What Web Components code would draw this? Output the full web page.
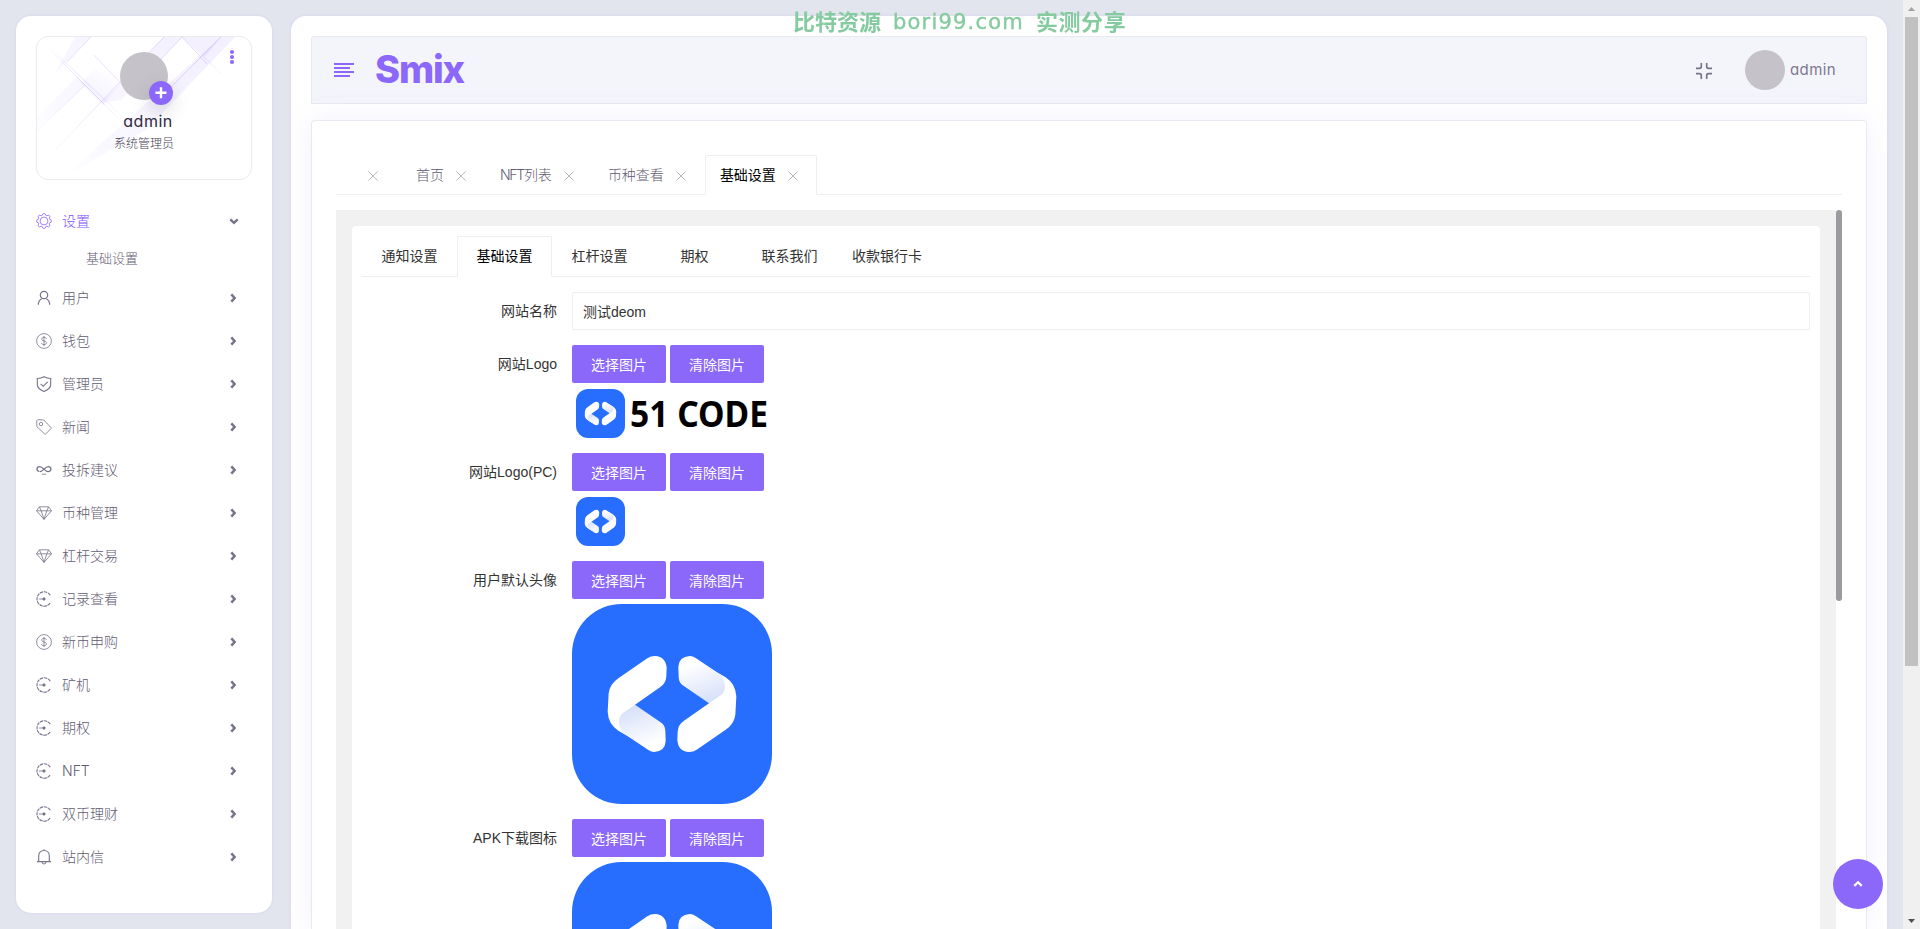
<!DOCTYPE html>
<html lang="zh-CN">
<head>
<meta charset="UTF-8">
<title>Smix</title>
<style>
  * { box-sizing: border-box; }
  html { height: 929px; overflow: hidden; }
  body {
    margin: 0;
    height: 929px;
    overflow: hidden;
    background: #e2e4ee;
    color: #7e7990;
    font: 14px/1.4 Inter, "Noto Sans CJK SC", sans-serif;
    --primary: #8b67fa;
    --line: #eeeeee;
    --latin: Inter, "Noto Sans CJK SC", sans-serif;
    --arial: "Liberation Sans", "Noto Sans CJK SC", sans-serif;
  }
</style>
</head>
<body>
<app-shell>
  <side-nav slot="side"></side-nav>
  <top-bar></top-bar>
  <page-card></page-card>
  <page-scrollbar slot="scroll"></page-scrollbar>
</app-shell>
<water-mark></water-mark>
<back-top></back-top>

<script>
const ICONS = {
  gear: '<circle cx="8" cy="8" r="3.900"/><path d="M6.300 2.300Q6.300.5 8 .5T9.700 2.300Q10.300 2.600 10.900 2.800 12.200 1.500 13.400 2.600T13.200 5.100L13.700 6.300Q15.500 6.300 15.500 8T13.700 9.700L13.200 10.900Q14.500 12.200 13.400 13.400T10.900 13.200L9.700 13.700Q9.700 15.500 8 15.500T6.300 13.700L5.100 13.200Q3.800 14.500 2.600 13.400T2.800 10.900L2.300 9.700Q.5 9.700.5 8T2.300 6.300L2.800 5.100Q1.500 3.800 2.600 2.600T5.100 2.800z"/>',
  user: '<circle cx="8" cy="5" r="3.700" stroke-width="1.200"/><path stroke-width="1.200" d="M2.300 14.800c0-3 1.300-5 3.300-6.100M13.700 14.800c0-3-1.300-5-3.300-6.100"/>',
  coin: '<circle cx="8" cy="8" r="7.400"/><path d="M10.300 5.900C10.200 4.900 9.300 4.300 8 4.300s-2.300.7-2.300 1.800c0 2.500 4.700 1.200 4.700 3.800 0 1.100-1 1.800-2.400 1.800s-2.400-.7-2.500-1.800M8 3v10"/>',
  shield: '<path stroke-width="1.100" d="M8 .7c2 1.200 4.200 1.700 6.700 1.800v6c0 3-2.300 5.200-6.700 6.900-4.400-1.700-6.700-3.900-6.700-6.900v-6C3.800 2.400 6 1.900 8 .7zM4.600 7.800l2.600 2.500 4.500-4.500"/>',
  tag: '<path d="M.7 1.800 1.800.7l6 .3 7.700 8.200-6.300 6.200L.9 7.700z"/><circle cx="5" cy="5" r="1.700"/>',
  loop: '<path stroke-width="1.300" d="M3.300 9.400C1.800 9.300 1 8.300 1 7.100s1-2.500 2.600-2.500C7 4.600 8.700 9.600 12.100 9.600c1.700 0 2.800-1 2.800-2.500s-1-2.500-2.600-2.500C8.700 4.600 7.300 9.600 3.800 9.600"/><path d="M5.800 12.200h4.400"/>',
  gem: '<path stroke-width=".8" d="M3.400 1.800h9.200l2.900 4L8 14.400.5 5.800zM.5 5.800h15M3.400 1.800 5.200 5.800 8 14.400 10.800 5.800l1.800-4"/>',
  record: '<path d="M14.300 4.200A7.200 7.200 0 1 0 14.300 11.800" stroke-width="1.100" stroke-dasharray="3.400 .7"/><path d="M3 8h5"/><circle cx="8" cy="8" r="1.200" fill="currentColor"/>',
  bell: '<path stroke-width="1.100" d="M1 12.600h14M2.700 12.500V6.700C2.700 3.600 5 1.500 8 1.500s5.300 2.100 5.300 5.200v5.800M8 1.500V.3M6 13c.2 1.300 1 2 2 2s1.800-.7 2-2"/>',
  right: '<path d="m6.300 4.300 3.300 3.700-3.300 3.700" stroke-width="2.500"/>',
  down: '<path d="M4.300 6.400 8 9.800l3.700-3.400" stroke-width="2.400"/>',
  up: '<path d="M4.300 9.900 8 6.300l3.700 3.600" stroke-width="2.200"/>',
  close: '<path d="m2.800 2.800 10.400 10.400M13.200 2.800 2.800 13.200" stroke-width="1.100"/>',
  shrink: '<path stroke-width="1.700" d="M5.300 0v3.500c0 1-.5 1.800-1.800 1.800H0M10.700 0v3.500c0 1 .5 1.800 1.800 1.800H16M5.300 16v-3.500c0-1-.5-1.800-1.800-1.800H0M10.700 16v-3.500c0-1 .5-1.800 1.800-1.800H16"/>',
  menu: '<path stroke-width="2" d="M0 1h20M0 5h16M0 9h20M0 13h16"/>'
};

function define(name, render) {
  customElements.define(name, class extends HTMLElement {
    constructor() {
      super();
      this.attachShadow({ mode: "open" });
    }
    connectedCallback() {
      this.shadowRoot.innerHTML = "<style>*{box-sizing:border-box}</style>" + render(this);
    }
  });
}

define("app-icon", (el) => {
  const name = el.getAttribute("name");
  const box = name === "menu" ? "0 0 20 14" : "0 0 16 16";
  return `
    <style>
      :host { display: inline-flex; width: 16px; height: 16px; flex: none; }
      svg { width: 100%; height: 100%; fill: none; stroke: currentColor; stroke-width: .8; }
    </style>
    <svg viewBox="${box}">${ICONS[name]}</svg>`;
});

define("app-shell", () => `
  <style>
    :host { display: flex; height: 929px; overflow: hidden; }
    .page { flex: 1; display: flex; gap: 19px; padding: 16px 16px 0; }
    main {
      flex: 1; height: 913px; padding: 20px 20px 0; background: #fff;
      border-radius: 15px 15px 0 0; display: flex; flex-direction: column; gap: 16px;
      overflow: hidden; box-shadow: 0 0 3px rgba(137,102,248,.12);
    }
  </style>
  <div class="page">
    <slot name="side"></slot>
    <main><slot></slot></main>
  </div>
  <slot name="scroll"></slot>`);

define("profile-card", () => `
  <style>
    :host {
      display: flex; flex-direction: column; align-items: center; position: relative;
      height: 144px; border: 1px solid #ebebef; border-radius: 12px; overflow: hidden; padding-top: 15px;
    }
    .bg { position: absolute; inset: 0; width: 100%; height: 100%; }
    .avatar { position: relative; width: 48px; height: 48px; border-radius: 50%; background: #c5c3c9; }
    .plus {
      position: absolute; left: 29px; top: 29px; width: 24px; height: 24px; border-radius: 50%;
      background: var(--primary); box-shadow: 0 6px 18px rgba(80,80,90,.22);
    }
    .plus svg { display: block; }
    .name {
      position: relative; margin: 10px 0 0 8px; font: 400 16px/22px var(--latin);
      font-feature-settings: "cv11"; color: #2d2a40; letter-spacing: .5px;
    }
    .role { position: relative; margin-top: 2px; font-size: 12px; line-height: 20px; color: #454154; font-weight: 300; }
    .dots { position: absolute; right: 17px; top: 13px; display: grid; gap: 1px; }
    .dots i { width: 4px; height: 4px; border-radius: 50%; background: var(--primary); }
  </style>
  <svg class="bg" viewBox="0 0 214 142" preserveAspectRatio="none">
    <defs>
      <linearGradient id="a" gradientUnits="userSpaceOnUse" x1="66" y1="30" x2="50" y2="62">
        <stop offset="0" stop-color="#8b67fa" stop-opacity="0"/>
        <stop offset="1" stop-color="#8b67fa" stop-opacity=".1"/>
      </linearGradient>
      <linearGradient id="b" gradientUnits="userSpaceOnUse" x1="160" y1="0" x2="20" y2="135">
        <stop offset="0" stop-color="#8b67fa" stop-opacity=".1"/>
        <stop offset=".7" stop-color="#8b67fa" stop-opacity=".05"/>
        <stop offset="1" stop-color="#8b67fa" stop-opacity="0"/>
      </linearGradient>
      <linearGradient id="c" gradientUnits="userSpaceOnUse" x1="160" y1="0" x2="10" y2="130">
        <stop offset="0" stop-color="#8b67fa" stop-opacity=".36"/>
        <stop offset=".6" stop-color="#8b67fa" stop-opacity=".24"/>
        <stop offset="1" stop-color="#8b67fa" stop-opacity="0"/>
      </linearGradient>
      <linearGradient id="d" gradientUnits="userSpaceOnUse" x1="8" y1="8" x2="90" y2="90">
        <stop offset="0" stop-color="#8b67fa" stop-opacity="0"/>
        <stop offset=".5" stop-color="#8b67fa" stop-opacity=".32"/>
        <stop offset="1" stop-color="#8b67fa" stop-opacity="0"/>
      </linearGradient>
    </defs>
    <path fill="url(#b)" d="M127 0h18L84 63 64 66zM184 0h14L110 92 24 142zM38 0h16L17 38zM48 48 0 94v-14l40-40z"/>
    <path fill="url(#a)" d="M44 46 72 18 84 46 66 68z"/>
    <path fill="url(#b)" d="M145 0 190 43 168 20 184 0z"/>
    <path fill="none" stroke="url(#c)" stroke-width=".7" d="M127 0 96 32M84 44 0 132M145 0 96 52M54 0 30 25M48 48 0 94M184 0 120 64M145 0l25 27"/>
    <path fill="none" stroke="url(#d)" stroke-width=".7" d="M8 8 90 90M14 12 84 78M57 18l40 42"/>
  </svg>
  <div class="avatar"><span class="plus">
    <svg viewBox="0 0 24 24" stroke="#fff" stroke-width="2.400"><path d="M12 6.300v11M6.500 11.800h11"/></svg>
  </span></div>
  <div class="name">admin</div>
  <div class="role">系统管理员</div>
  <div class="dots"><i></i><i></i><i></i></div>`);

define("menu-item", (el) => `
  <style>
    :host {
      display: flex; align-items: center; height: 43px; padding-right: 11px;
      font-weight: 300; color: #5f5b72;
    }
    :host([open]) { color: #7c52fa; height: 42px; margin-bottom: 1px; padding-right: 10px; }
    .text { flex: 1; padding-left: 10px; line-height: 20px; }
    .icon { color: #77738a; }
    :host([open]) .icon { color: var(--primary); }
    .arrow { color: #77738a; }
  </style>
  <app-icon class="icon" name="${el.getAttribute("icon")}"></app-icon>
  <span class="text"><slot></slot></span>
  <app-icon class="arrow" name="${el.hasAttribute("open") ? "down" : "right"}"></app-icon>`);

const MENU = [
  ["user", "用户"], ["coin", "钱包"], ["shield", "管理员"], ["tag", "新闻"],
  ["loop", "投拆建议"], ["gem", "币种管理"], ["gem", "杠杆交易"], ["record", "记录查看"],
  ["coin", "新币申购"], ["record", "矿机"], ["record", "期权"], ["record", "NFT"],
  ["record", "双币理财"], ["bell", "站内信"]
];

define("side-nav", () => `
  <style>
    :host {
      display: block; width: 256px; height: 897px; padding: 20px; background: #fff;
      border-radius: 15px; box-shadow: 0 0 3px rgba(137,102,248,.12);
    }
    nav { padding-top: 20px; }
    .sub { padding-left: 50px; height: 33px; line-height: 31px; font-size: 13px; font-weight: 300; color: #5f5b72; }
  </style>
  <profile-card></profile-card>
  <nav>
    <menu-item icon="gear" open>设置</menu-item>
    <div class="sub">基础设置</div>
    ${MENU.map(([icon, text]) => `<menu-item icon="${icon}">${text}</menu-item>`).join("")}
  </nav>`);

define("top-bar", () => `
  <style>
    :host {
      display: flex; align-items: center; height: 68px; flex: none; padding: 0 30px 0 22px;
      background: #f4f5fb; border: 1px solid #e9e9f1; border-radius: 3px 3px 0 0;
    }
    .menu { width: 20px; height: 14px; color: var(--primary); }
    .brand {
      margin: -2px 0 0 21px; flex: 1; font: 800 38px/60px var(--latin); color: var(--primary);
      letter-spacing: -1.200px;
    }
    .shrink { margin: 2px 33px 0 0; color: #77738a; }
    .avatar { width: 40px; height: 40px; border-radius: 50%; background: #c5c3c9; }
    .name { margin-left: 5px; font: 400 15px/20px var(--latin); font-feature-settings: "cv11"; letter-spacing: .4px; }
  </style>
  <app-icon class="menu" name="menu"></app-icon>
  <span class="brand">Smix</span>
  <app-icon class="shrink" name="shrink"></app-icon>
  <span class="avatar"></span>
  <span class="name">admin</span>`);

define("page-tab", () => `
  <style>
    :host {
      display: flex; justify-content: center; align-items: center; min-width: 65px; height: 40px;
      padding: 0 15px; font: 300 14px/20px var(--latin); color: #5f5b72;
    }
    :host([active]) {
      padding: 0 14px; border: 1px solid var(--line); border-bottom-color: #fff;
      border-radius: 2px 2px 0 0; color: #000; font-weight: 400;
    }
    .latin { letter-spacing: -1.300px; }
    app-icon { width: 14px; height: 14px; margin: 2px 2px 0 10px; color: #b4b4b8; }
  </style>
  <slot name="latin" class="latin"></slot><slot></slot><app-icon name="close"></app-icon>`);

define("page-card", () => `
  <style>
    :host {
      display: flex; flex-direction: column; flex: 1; min-height: 0; padding: 34px 24px 0; background: #fff;
      border: 1px solid #e9e9f1; border-bottom: 0; border-radius: 4px 4px 0 0;
      box-shadow: 0 0 30px rgba(137,102,248,.1);
    }
    .tabs { display: flex; height: 40px; flex: none; border-bottom: 1px solid var(--line); }
    .frame { display: flex; margin-top: 15px; flex: 1; min-height: 0; overflow: hidden; }
    .body { flex: 1; background: #f1f1f1; padding: 16px 16px 0; }
    .track { width: 6px; }
    .thumb { height: 391px; border-radius: 3px; background: #9a9a9f; }
  </style>
  <div class="tabs">
    <page-tab></page-tab>
    <page-tab>首页</page-tab>
    <page-tab><span slot="latin">NFT</span>列表</page-tab>
    <page-tab>币种查看</page-tab>
    <page-tab active>基础设置</page-tab>
  </div>
  <div class="frame">
    <div class="body"><settings-form></settings-form></div>
    <div class="track"><div class="thumb"></div></div>
  </div>`);

define("form-row", (el) => `
  <style>
    :host { display: flex; margin-bottom: 15px; font: 14px/20px var(--arial); color: #333; }
    label { width: 210px; padding: 9px 15px; text-align: right; flex: none; }
    .field { flex: 1; }
    .buttons { display: flex; gap: 4px; margin-bottom: 5px; }
    ::slotted(*) { display: block; }
  </style>
  <label>${el.getAttribute("label")}</label>
  <div class="field">
    ${el.hasAttribute("upload") ? '<div class="buttons"><form-button>选择图片</form-button><form-button>清除图片</form-button></div>' : ""}
    <slot></slot>
  </div>`);

define("form-button", () => `
  <style>
    :host {
      display: block; width: 94px; height: 38px; border-radius: 2px; background: var(--primary);
      color: #fff; font: 400 14px/40px var(--arial); text-align: center;
    }
  </style>
  <slot></slot>`);

define("code-logo", (el) => {
  const size = el.getAttribute("size");
  return `
    <style>
      :host { display: block; width: ${size}px; height: ${size}px; }
      svg { display: block; width: 100%; height: 100%; }
    </style>
    <svg viewBox="0 0 600 600">
      <defs>
        <linearGradient id="fold" gradientUnits="userSpaceOnUse" x1="170" y1="310" x2="215" y2="430">
          <stop offset="0" stop-color="#d6e0fa"/>
          <stop offset="1" stop-color="#fff"/>
        </linearGradient>
        <g id="half">
          <path fill="#fff" d="M249 156Q282 158 284 193L283 217Q282 238 264 250L189 302 200 415 139 380Q109 360 107 323L110 268Q113 241 139 223L226 163Q236 156 249 156Z"/>
          <path fill="url(#fold)" d="M189 302 269 357Q279 365 280 380L281 412Q279 442 247 444 238 444 229 438L154 388Q141 374 141 352 141 336 154 326Z"/>
        </g>
      </defs>
      <rect width="600" height="600" rx="149" fill="#276eff"/>
      <use href="#half"/>
      <use href="#half" transform="rotate(180 300 300)"/>
    </svg>`;
});

define("brand-logo", (el) => `
  <style>
    :host { display: block; height: 50px; }
    .row { display: flex; align-items: center; height: 50px; padding-left: 4px; }
    svg { display: block; margin-left: 5px; overflow: visible; }
    text { font: 700 36px "Noto Sans", sans-serif; fill: #000; }
  </style>
  <div class="row">
    <code-logo size="49"></code-logo>
    ${el.hasAttribute("text") ? '<svg width="142" height="50"><text x="0" y="38.500" textLength="138" lengthAdjust="spacingAndGlyphs">51 CODE</text></svg>' : ""}
  </div>`);

define("settings-form", () => `
  <style>
    :host { display: block; height: 1000px; background: #fff; border-radius: 4px; padding: 10px; }
    .tabs {
      display: flex; height: 41px; border-bottom: 1px solid var(--line); margin-bottom: 15px;
      font: 400 14px/41px var(--arial); color: #333;
    }
    .tabs span { min-width: 95px; height: 41px; padding: 0 15px; text-align: center; }
    .tabs .active {
      padding: 0 14px; border: 1px solid var(--line); border-bottom-color: #fff;
      border-radius: 2px 2px 0 0; line-height: 39px; color: #000;
    }
    .input {
      height: 38px; padding: 0 10px; border: 1px solid var(--line); border-radius: 2px;
      line-height: 38px;
    }
  </style>
  <div class="tabs">
    <span>通知设置</span><span class="active">基础设置</span><span>杠杆设置</span>
    <span>期权</span><span>联系我们</span><span>收款银行卡</span>
  </div>
  <form-row label="网站名称"><div class="input">测试deom</div></form-row>
  <form-row label="网站Logo" upload><brand-logo text></brand-logo></form-row>
  <form-row label="网站Logo(PC)" upload><brand-logo></brand-logo></form-row>
  <form-row label="用户默认头像" upload><code-logo size="200"></code-logo></form-row>
  <form-row label="APK下载图标" upload><code-logo size="200"></code-logo></form-row>`);

define("page-scrollbar", () => `
  <style>
    :host { display: flex; flex-direction: column; align-items: center; width: 17px; background: #f0f0f0; }
    svg { width: 17px; height: 17px; display: block; }
    .thumb { width: 13px; height: 649px; background: #c1c1c1; margin-bottom: auto; }
  </style>
  <svg><path d="M8.500 7 12 11H5z" fill="#a3a3a3"/></svg>
  <div class="thumb"></div>
  <svg><path d="M8.500 11 12 7H5z" fill="#505050"/></svg>`);

define("water-mark", () => `
  <style>
    :host {
      position: fixed; left: 793px; top: 5px; display: flex; gap: 12px; white-space: nowrap;
      color: #85cba0; font: 700 22px/31px "Noto Sans CJK SC", sans-serif; height: 31px;
    }
    .site { font: 400 21px/34px "DejaVu Sans", sans-serif; -webkit-text-stroke: .4px #85cba0; letter-spacing: 1.200px; }
    .tail { letter-spacing: .6px; }
  </style>
  <span>比特资源</span><span class="site">bori99.com</span><span class="tail">实测分享</span>`);

define("back-top", () => `
  <style>
    :host {
      position: fixed; left: 1833px; top: 859px; width: 50px; height: 50px; border-radius: 50%;
      display: flex; align-items: center; justify-content: center;
      background: var(--primary); color: #fff;
    }
  </style>
  <app-icon name="up"></app-icon>`);
</script>
</body>
</html>
